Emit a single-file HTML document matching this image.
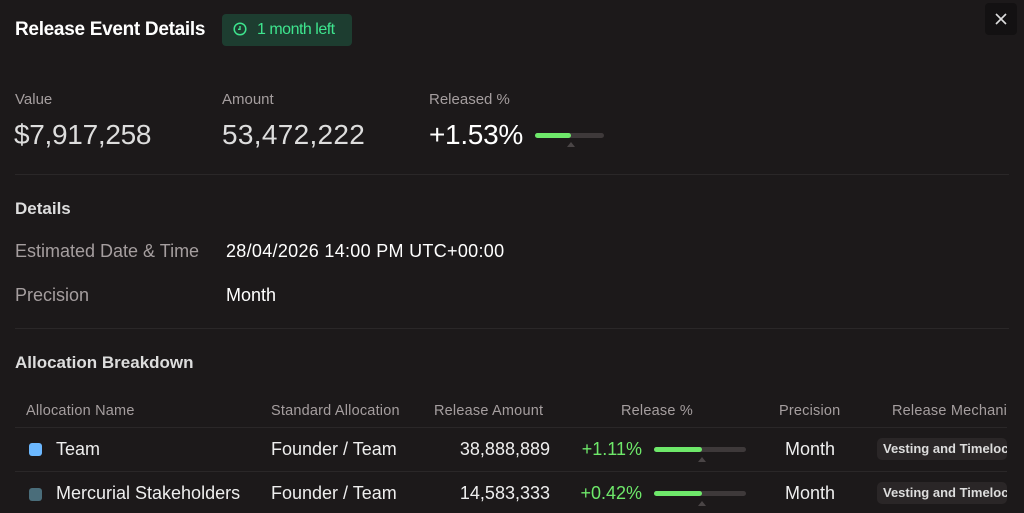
<!DOCTYPE html>
<html><head><style>
*{margin:0;padding:0;box-sizing:border-box}
body{width:1024px;height:513px;background:#1c191a;font-family:"Liberation Sans",sans-serif;color:#fff;position:relative;overflow:hidden}
.a{position:absolute;white-space:nowrap}
.lbl{color:#a59e9f;font-size:15px}
.big{font-size:28px;letter-spacing:-0.3px}
.hr{position:absolute;left:15px;right:15px;height:1px;background:#2a2728}
.th{color:#a59e9f;font-size:14.5px;letter-spacing:0.2px}
.td{font-size:18px;color:#eee}
.bar{position:absolute;width:92px;height:5px;border-radius:3px;background:#3e393a}
.bar i{position:absolute;left:0;top:0;height:5px;width:48px;background:#6ee86a;border-radius:3px}
.tri{position:absolute;width:0;height:0;border-left:4px solid transparent;border-right:4px solid transparent;border-bottom:5px solid #4a4546}
.tag{position:absolute;left:877px;height:22px;width:130px;background:#2a2627;border-radius:5px;font-size:13px;font-weight:bold;color:#ddd;padding:3px 0 0 6px;overflow:hidden;white-space:nowrap}
.g{color:#6ee86a}
.r{text-align:right}
</style></head><body>
<div class="a" style="left:15px;top:19px;font-size:19px;font-weight:bold;letter-spacing:-0.3px">Release Event Details</div>
<div class="a" style="left:222px;top:14px;width:130px;height:32px;background:#1d3d30;border-radius:4px;color:#3ee58e;font-size:16px;padding:7px 0 0 35px;letter-spacing:-0.5px">1 month left</div>
<svg class="a" style="left:233px;top:22px" width="14" height="14" viewBox="0 0 14 14"><circle cx="7" cy="7" r="5.8" fill="none" stroke="#3ee58e" stroke-width="1.5"/><path d="M7 4v3.3H5" fill="none" stroke="#3ee58e" stroke-width="1.4"/></svg>
<div class="a" style="left:985px;top:3px;width:32px;height:32px;background:#131112;border-radius:4px"></div>
<svg class="a" style="left:995px;top:13px" width="12" height="12" viewBox="0 0 12 12"><path d="M1 1L11 11M11 1L1 11" stroke="#ddd" stroke-width="1.6"/></svg>

<div class="a lbl" style="left:15px;top:91px">Value</div>
<div class="a lbl" style="left:222px;top:91px">Amount</div>
<div class="a lbl" style="left:429px;top:91px">Released %</div>
<div class="a big" style="left:14px;top:119px;color:#ddd">$7,917,258</div>
<div class="a big" style="left:222px;top:119px;color:#ddd;letter-spacing:0.3px">53,472,222</div>
<div class="a big" style="left:429px;top:119px">+1.53%</div>
<div class="bar" style="left:535px;top:133px;width:69px"><i style="width:36px"></i></div>
<div class="tri" style="left:567px;top:142px"></div>
<div class="hr" style="top:174px"></div>

<div class="a" style="left:15px;top:199px;font-size:17px;font-weight:bold;color:#ddd">Details</div>
<div class="a" style="left:15px;top:241px;font-size:18px;color:#a59e9f">Estimated Date &amp; Time</div>
<div class="a" style="left:226px;top:241px;font-size:18px;letter-spacing:0.3px">28/04/2026 14:00 PM UTC+00:00</div>
<div class="a" style="left:15px;top:285px;font-size:18px;color:#a59e9f">Precision</div>
<div class="a" style="left:226px;top:285px;font-size:18px">Month</div>
<div class="hr" style="top:328px"></div>

<div class="a" style="left:15px;top:353px;font-size:17px;font-weight:bold;color:#ddd">Allocation Breakdown</div>
<div class="a th" style="left:26px;top:403px">Allocation Name</div>
<div class="a th" style="left:271px;top:403px">Standard Allocation</div>
<div class="a th" style="left:434px;top:403px">Release Amount</div>
<div class="a th" style="left:621px;top:403px">Release %</div>
<div class="a th" style="left:779px;top:403px">Precision</div>
<div class="a th" style="left:892px;top:403px;width:115px;overflow:hidden">Release Mechanism</div>
<div class="hr" style="top:427px;right:17px"></div>

<div class="a" style="left:29px;top:443px;width:13px;height:13px;border-radius:3px;background:#6cb8ff"></div>
<div class="a td" style="left:56px;top:439px">Team</div>
<div class="a td" style="left:271px;top:439px">Founder / Team</div>
<div class="a td r" style="left:420px;width:130px;top:439px">38,888,889</div>
<div class="a td g r" style="left:540px;width:102px;top:439px">+1.11%</div>
<div class="bar" style="left:654px;top:447px"><i></i></div>
<div class="tri" style="left:698px;top:457px"></div>
<div class="a td" style="left:785px;top:439px">Month</div>
<div class="tag" style="top:438px">Vesting and Timelock</div>
<div class="hr" style="top:471px;right:17px"></div>

<div class="a" style="left:29px;top:488px;width:13px;height:13px;border-radius:3px;background:#4a6d7a"></div>
<div class="a td" style="left:56px;top:483px">Mercurial Stakeholders</div>
<div class="a td" style="left:271px;top:483px">Founder / Team</div>
<div class="a td r" style="left:420px;width:130px;top:483px">14,583,333</div>
<div class="a td g r" style="left:540px;width:102px;top:483px">+0.42%</div>
<div class="bar" style="left:654px;top:491px"><i></i></div>
<div class="tri" style="left:698px;top:501px"></div>
<div class="a td" style="left:785px;top:483px">Month</div>
<div class="tag" style="top:482px">Vesting and Timelock</div>
</body></html>
